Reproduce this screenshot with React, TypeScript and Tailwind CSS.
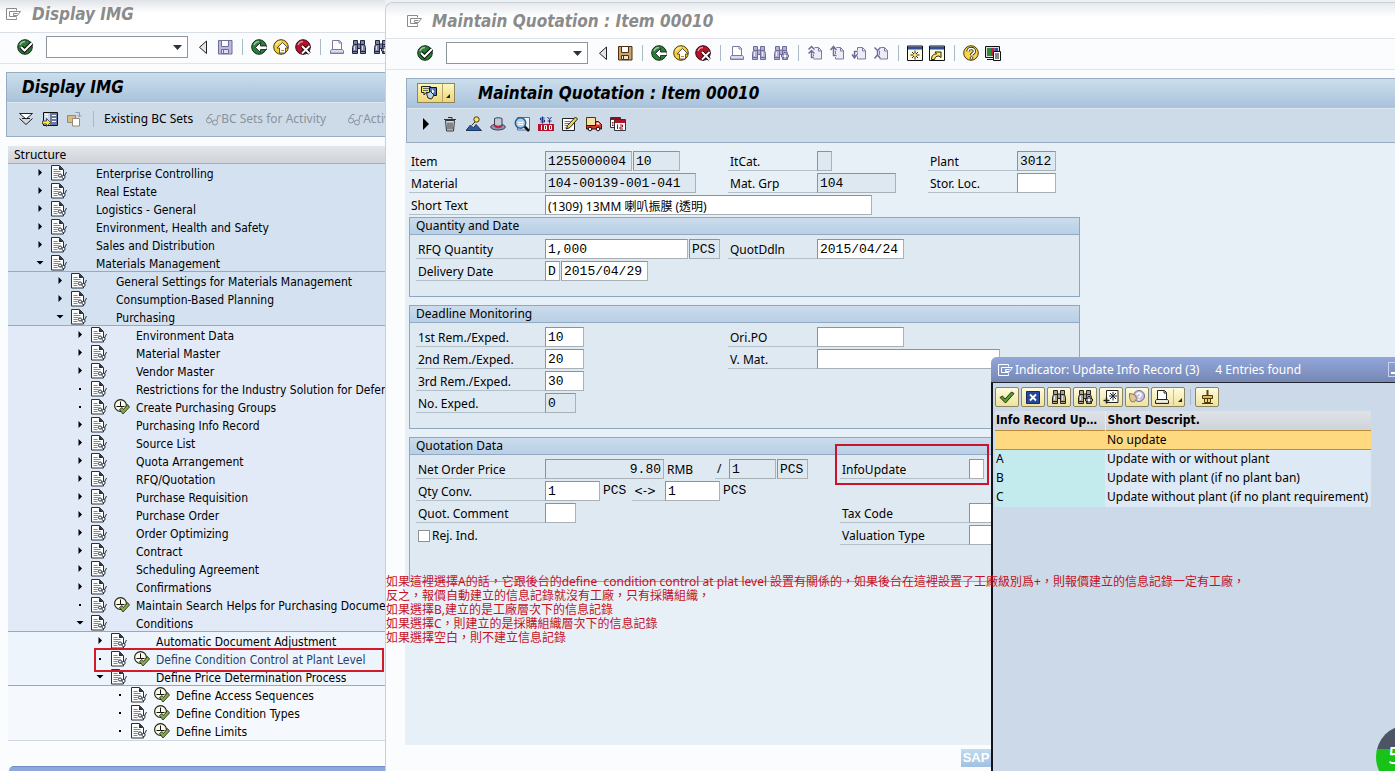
import type { ReactNode } from "react";

type IconProps = { children: ReactNode; w?: number; h?: number };

const Svg = ({ children, w = 16, h = 16 }: IconProps) => (
  <svg width={w} height={h} viewBox={`0 0 ${w} ${h}`} fill="none" aria-hidden="true" className="block shrink-0">
    {children}
  </svg>
);

/* ---------- icons ---------- */

const WindowIcon = ({ color = "#8b8b8b" }: { color?: string }) => (
  <Svg>
    <path d="M11.500 4.500V2.500H1.500v11h10V11.500M4.500 10.500v-5H15.500L12.500 9.500H8.500V7.500h4M4.500 10.500h7l1-1" stroke={color} />
  </Svg>
);

const Ball = ({ fill, edge, children }: { fill: string; edge: string; children: ReactNode }) => (
  <Svg>
    <circle cx="8" cy="8" r="7.300" fill={fill} stroke={edge} />
    <path d="M3 6a5.5 5.5 0 0 1 5-3.5" stroke="#fff" strokeOpacity=".55" strokeWidth="1.5" />
    {children}
  </Svg>
);

const OkIcon = () => (
  <Ball fill="#2c7a34" edge="#0d2b12">
    <path d="M4 8l3.500 3.500L15 4" stroke="#000" strokeWidth="4" />
    <path d="M4 8l3.500 3.500L15 4" stroke="#fff" strokeWidth="2.2" />
  </Ball>
);
const BackIcon = () => (
  <Ball fill="#27803a" edge="#0d2b12">
    <path d="M4.500 8.500l5-5V7H16v3.500H9.500V13.500z" fill="#fff" stroke="#111" strokeWidth=".8" />
  </Ball>
);
const UpIcon = () => (
  <Ball fill="#f4cf38" edge="#4a3a08">
    <path d="M9.500 3.500l5.500 5.500h-2.500V14H6.500V9H4z" fill="#fff" stroke="#333" strokeWidth=".8" />
    <path d="M8 11.500h3" stroke="#b89018" />
  </Ball>
);
const CancelIcon = () => (
  <Ball fill="#b3122b" edge="#3a0610">
    <path d="M7 7l7.500 7.500M14.500 7L7 14.500" stroke="#000" strokeWidth="3.600" />
    <path d="M7 7l7.500 7.500M14.500 7L7 14.500" stroke="#fff" strokeWidth="2" />
  </Ball>
);
const TriLeftIcon = () => (
  <Svg>
    <path d="M11.500 2v12.500l-7-6.200z" fill="#e4e4e4" stroke="#222" />
  </Svg>
);
const SaveIcon = ({ on }: { on?: boolean }) => (
  <Svg>
    <path d="M1.500 1.500h13.500v13.500h-13.500z" fill={on ? "#c9a46c" : "#b9b8df"} stroke={on ? "#4b2e14" : "#6f6d9c"} />
    <path d="M4.500 1.500h7v6h-7z" fill="#fff" stroke={on ? "#4b2e14" : "#6f6d9c"} />
    <path d="M4.500 10.500h7v4h-7z" fill={on ? "#f3e6c8" : "#dedef2"} stroke={on ? "#4b2e14" : "#6f6d9c"} />
    <path d="M6.500 11v3" stroke={on ? "#4b2e14" : "#6f6d9c"} />
  </Svg>
);
const PrintIcon = ({ color = "#7c7aa4", tray = "#b6b4d4" }: { color?: string; tray?: string }) => (
  <Svg>
    <path d="M3.500 10.500v-9h7l2 2v7" fill="#fff" stroke={color} />
    <path d="M10 1.500V4h2.500" stroke={color} />
    <path d="M2.500 10.500h11l1 1.500v2.500h-13v-2.500z" fill={tray} stroke={color} />
    <path d="M2 12h12" stroke="#fff" />
  </Svg>
);
const FindIcon = ({ color = "#6d6b99", fill = "#b3b1d6", plus }: { color?: string; fill?: string; plus?: boolean }) => (
  <Svg>
    <path
      d="M2.500 1.500h4v3.500h3v-3.500h4v4l1 3v6h-5v-5h-3v5h-5v-6l1-3z"
      fill={fill}
      stroke={color}
    />
    <path d="M3 5.500h3.500M9.500 5.500h4M6.500 5v5M9.500 5v5M1.500 12.500h5M9.500 12.500h5" stroke={color} />
    <path d="M3.500 7v4M11.500 7v4" stroke="#fff" strokeOpacity=".75" />
    {plus && <path d="M11 7.500h2v2.500h2.500v2h-2.500v2.500h-2v-2.500h-2.500v-2h2.500z" fill="#fff" stroke={color} />}
  </Svg>
);

const pageArrows = {
  first: "M1.500 4.500L4.500 1.500 7.500 4.500M1.500 8.500L4.500 5.500 7.500 8.500M4.500 6v6.500h2",
  prev: "M1.500 5l3-3.500L7.500 5M4.500 3v7.500h3",
  next: "M1 9.500l2.500 3.500 2.500-3.500M3.500 13V6.500h3",
  last: "M1.500 2.500l3 3 3-3M1.500 13.500l3-3.500 3 3.500M4.500 5v5",
};
const PageIcon = ({ dir }: { dir: keyof typeof pageArrows }) => (
  <Svg>
    <path d="M6.500 2.500h5l3 3v8.500h-8z" fill="#ecebf6" stroke="#7c7aa4" />
    <path d="M11.500 2.500v3.500H14.500" stroke="#7c7aa4" />
    <path d={pageArrows[dir]} stroke="#fff" strokeWidth="3" />
    <path d={pageArrows[dir]} stroke="#6d6b99" strokeWidth="1.500" />
  </Svg>
);
const SessionIcon = () => (
  <Svg>
    <path d="M.5 1h15v14.500H.5z" fill="#fffbe0" stroke="#111" />
    <path d="M1 1.500h14v3H1z" fill="#2d4f96" />
    <path d="M8 5.500v9M3.500 10h9M5 7l6 6M11 7l-6 6" stroke="#222" />
    <circle cx="8" cy="10" r="1.700" fill="#ffe95a" />
  </Svg>
);
const ShortcutIcon = () => (
  <Svg>
    <path d="M.5 1h15v14.500H.5z" fill="#fffbe0" stroke="#111" />
    <path d="M1 1.500h14v3H1z" fill="#2d4f96" />
    <path d="M2.500 14.500c0-4 2-5.500 5-5.500L6 7H12V12.500L10 11c-3 0-4 1-4.500 3.500z" fill="#ffe95a" stroke="#222" />
  </Svg>
);
const HelpIcon = () => (
  <Svg>
    <circle cx="8" cy="8" r="7.300" fill="#f7d64a" stroke="#4a3a08" />
    <path d="M5 6.500C5 2.500 11.500 2.500 11.500 6.300c0 2-3 2-3 4" stroke="#222" strokeWidth="3.200" />
    <path d="M5 6.500C5 2.500 11.500 2.500 11.500 6.300c0 2-3 2-3 4" stroke="#fff" strokeWidth="1.600" />
    <circle cx="8.500" cy="13" r="1.400" fill="#fff" stroke="#222" strokeWidth=".8" />
  </Svg>
);
const LayoutIcon = () => (
  <Svg>
    <path d="M.5 1.500h14v11H.5z" fill="#ddd" stroke="#111" />
    <path d="M2 3h4v8H2z" fill="#2c8a3c" />
    <path d="M6 3h3.500v8H6z" fill="#c3243c" />
    <path d="M9.500 3h3.500v8H9.500z" fill="#3a4fae" />
    <path d="M2 14.500h7" stroke="#111" />
    <path d="M8.500 6.500h7v9h-7z" fill="#fff" stroke="#111" />
    <path d="M10 9h4M10 11h4M10 13h4" stroke="#111" />
  </Svg>
);
const ExpandIcon = () => (
  <Svg>
    <path d="M1.500 2.500h13L8 8z" fill="#fff" stroke="#222" />
    <path d="M1.500 7.500L8 13.500l6.500-6M4 7.500h8" stroke="#222" />
  </Svg>
);
const PositionIcon = () => (
  <Svg>
    <path d="M1.500 1.500h14v13h-14z" fill="#c9d4e6" stroke="#111" />
    <path d="M8 2h7v12H8z" fill="#69799f" />
    <path d="M3 3.500h3M3 5.500h3M10 4.500h4M10 7.500h4M10 10.500h4" stroke="#fff" />
    <path d="M.5 10h4V7.500l4 4-4 4V13h-4z" fill="#f8e837" stroke="#333" strokeWidth=".8" />
  </Svg>
);
const CopyIcon = () => (
  <Svg>
    <path d="M1.500 4.500h8v7h-8z" fill="#d8b98a" stroke="#9a8a70" />
    <path d="M6.500 7.500h7v7.500h-7z" fill="#fff" stroke="#9a8a70" />
    <path d="M9.500 1.500h4v4M11.500 4l2 2 2-2" stroke="#8b9db5" />
  </Svg>
);
const GlassesIcon = () => (
  <Svg>
    <circle cx="4" cy="9.500" r="2.500" stroke="#8a929c" />
    <circle cx="10" cy="11.500" r="2.500" stroke="#8a929c" />
    <path d="M6.500 10l1.500.5M2 8L5 3.500M12 9.500l1-5 3 .5M5 3.500h2.500" stroke="#8a929c" />
  </Svg>
);
const DocIcon = () => (
  <Svg>
    <path d="M.5.500h8l4 4v10.500H.5z" fill="#fff" stroke="#26303c" />
    <path d="M8 .500v4.500h4.500z" fill="#26303c" />
    <path d="M2.500 4.500h4M2.500 6.500h7M2.500 8.500h5M2.500 10.500h4M2.500 12.500h4" stroke="#7a8796" />
    <circle cx="9" cy="10.500" r="1.600" fill="#fff" stroke="#26303c" />
    <circle cx="12.500" cy="12" r="1.600" fill="#fff" stroke="#26303c" />
    <path d="M13.500 11l2-4" stroke="#26303c" />
  </Svg>
);
const ExecIcon = () => (
  <Svg>
    <circle cx="6.500" cy="6.500" r="5.900" fill="#fffbe8" stroke="#1d2712" strokeWidth="1.200" />
    <path d="M6.500 2.500v5h4M6.500 7.500h-4" stroke="#111" />
    <path d="M5.500 10.500L9 15 15.500 8l-2-2.500L9.500 10.500 8 8.500z" fill="#8aa84c" stroke="#26341a" strokeWidth=".9" />
  </Svg>
);
const ServicesIcon = () => (
  <Svg w={18}>
    <path d="M1.500 1.500h9v6H6L4 10V7.500H1.500z" fill="#f8ea4e" stroke="#222" />
    <path d="M3 3.500h6M3 5.500h5" stroke="#666" />
    <path d="M9.500 2.500h7v8h-7z" fill="#4679b5" stroke="#111" />
    <path d="M12 4l2.500 2.500L12 9z" fill="#fff" />
    <path d="M6.500 8.500l4-2 3.500 3.500-2.500 4-3.500-1z" fill="#bcd3ea" stroke="#222" />
  </Svg>
);
const PlayIcon = () => (
  <Svg>
    <path d="M5 2l6 6-6 6z" fill="#000" />
  </Svg>
);
const TrashIcon = () => (
  <Svg>
    <path d="M3.500 4.500h9l-1 10.500h-7z" fill="#d3d8de" stroke="#333" />
    <path d="M2 3.500h12M6 1.500h4v2M6 6.500v7M8 6.500v7M10 6.500v7" stroke="#333" />
  </Svg>
);
const HeaderIcon = () => (
  <Svg>
    <path d="M0 14.500L4.500 9l3 3 2.500-3.500 5.500 6z" fill="#2e5c9e" stroke="#1c355f" />
    <path d="M6 9l3.500-3.500" stroke="#333" />
    <circle cx="10.500" cy="3.500" r="2.700" fill="#f8e068" stroke="#4a3a08" />
  </Svg>
);
const HatIcon = () => (
  <Svg>
    <ellipse cx="8" cy="11" rx="7.300" ry="3" fill="#8f97b0" stroke="#3a3f55" />
    <path d="M4.500 10V2.500C6 1.500 10.500 1.500 12 2.500V10c-2 1.500-5.500 1.500-7.500 0z" fill="#c3c8d8" stroke="#3a3f55" />
    <path d="M4.500 8.500c2 1.500 5.500 1.500 7.500 0V11c-2 1.500-5.500 1.500-7.500 0z" fill="#c3243c" />
  </Svg>
);
const DetailIcon = () => (
  <Svg>
    <path d="M3.500 1.500h12v12.500h-12z" fill="#eef3fa" stroke="#52719e" />
    <path d="M10 10l5 5" stroke="#111" strokeWidth="2.500" />
    <circle cx="6.500" cy="7" r="5.200" fill="#a9d0ee" stroke="#2b5a92" strokeWidth="1.500" />
    <path d="M3.500 6.500h6M4 8.500h5" stroke="#fff" />
  </Svg>
);
const ConditionsIcon = () => (
  <Svg>
    <path d="M0 8h16v7H0z" fill="#b3122b" />
    <path d="M3.500 9v5M6.500 9.500h2v4h-2zM11.500 9.500h2v4h-2z" stroke="#fff" />
    <path d="M6.500 2h-4v2h4v2h-4M4.500 .500v7M9.500 1l2 2.500 2-2.500M11.500 3.500v4M9.500 5h4" stroke="#1f2f8a" />
  </Svg>
);
const EditIcon = () => (
  <Svg>
    <path d="M.5 2.500h12v12H.5z" fill="#fff" stroke="#222" />
    <path d="M2.500 5.500h6M2.500 7.500h5M2.500 9.500h3M2.500 12h2" stroke="#777" />
    <path d="M4.500 13l1-3.500 8-8.500L15.500 3 8 11.500z" fill="#f0d550" stroke="#222" />
  </Svg>
);
const TruckIcon = () => (
  <Svg>
    <path d="M.5 1.500h9v8H.5z" fill="#f5dfa2" stroke="#4a3a08" />
    <path d="M9.500 5.500h3l3 3v4.500H.5V9.500h9z" fill="#d23a2a" stroke="#4a0d08" />
    <path d="M10.500 6.500h2l1.500 2h-3.500z" fill="#fff" />
    <circle cx="4" cy="13" r="1.800" fill="#fff" stroke="#111" />
    <circle cx="12" cy="13" r="1.800" fill="#fff" stroke="#111" />
  </Svg>
);
const CalendarIcon = () => (
  <Svg>
    <path d="M.5 1.500h10v10H.5z" fill="#fff" stroke="#333" />
    <path d="M1 2h9v2H1zM2 6h1.500v1.500H2zM2 8.500h1.500V10H2z" fill="#8d1224" />
    <path d="M4.500 3.500h11v11h-11z" fill="#fff" stroke="#333" />
    <path d="M5 4h10v3H5z" fill="#b3122b" />
    <path d="M7.500 8.500v4.500M10 9h2.500v2H10v2h3" stroke="#8d1224" />
  </Svg>
);
const TickIcon = () => (
  <Svg>
    <path d="M1 8.500L3.500 7l2.500 3 6.500-7L15 4.500 6.500 14z" fill="#5d9b32" stroke="#1d3b10" />
  </Svg>
);
const CloseIcon = () => (
  <Svg>
    <path d="M1.500 2.500h13v12h-13z" fill="#27489a" stroke="#142a66" />
    <path d="M5 5.500l6 6M11 5.500l-6 6" stroke="#fff" strokeWidth="1.800" />
  </Svg>
);
const PersonalIcon = () => (
  <Svg>
    <path d="M3.500 1.500h11.500v12H3.500z" fill="#fff" stroke="#222" />
    <path d="M10 3v8.500M6 7h8M7 4l6 6M13 4l-6 6" stroke="#222" />
    <path d="M.5 11.500h6M3.500 8.500v6" stroke="#222" strokeWidth="1.600" />
  </Svg>
);
const HandHelpIcon = () => (
  <Svg>
    <circle cx="10" cy="7" r="5.500" fill="#c6bfe0" stroke="#6d6b99" />
    <path d="M8 6c0-2.500 4-2.500 4 0 0 1.300-2 1.500-2 3M10 10v1.500" stroke="#fff" strokeWidth="1.600" />
    <path d="M.5 4.500l3 .5 3 1.500 1 3-2 3.500-3.500-.5-1.500-4z" fill="#e0c69a" stroke="#8d7a52" />
  </Svg>
);
const PinIcon = () => (
  <Svg>
    <path d="M8.500 1v7" stroke="#5a4210" strokeWidth="2" />
    <path d="M3.500 6.500h10v3h-10z" fill="#e2b95e" stroke="#4a3a08" />
    <path d="M5.500 9.500h6v4h-6z" fill="#f0cf86" stroke="#4a3a08" />
    <path d="M3 14.500h11M8.500 10v3" stroke="#4a3a08" />
  </Svg>
);

/* ---------- shared bits ---------- */

const IconButton = ({ label, children }: { label: string; children: ReactNode }) => (
  <button type="button" aria-label={label} className="flex shrink-0 items-center justify-center">
    {children}
  </button>
);

const Sep = () => <span className="mr-[2px] ml-[3px] h-4 w-px shrink-0 bg-[#a9b9c6]" />;

const CommandField = () => (
  <div className="mr-[1px] ml-[7px] flex h-[22px] w-[142px] shrink-0 border border-[#8e959c] bg-white">
    <input aria-label="Command" className="w-full min-w-0 px-1 outline-none" />
    <button type="button" aria-label="Command history" className="flex w-5 shrink-0 items-center justify-center">
      <svg width="9" height="5" aria-hidden="true">
        <path d="M0 0h9L4.500 5z" fill="#2b3340" />
      </svg>
    </button>
  </div>
);

type FieldProps = {
  label: string;
  id?: string;
  value?: string;
  cls: string;
  ro?: boolean;
  right?: boolean;
  sans?: boolean;
};

const Field = ({ label, id, value = "", cls, ro, right, sans }: FieldProps) => (
  <input
    id={id}
    aria-label={label}
    defaultValue={value}
    readOnly={ro}
    className={`h-5 shrink-0 border border-t-[#8b9299] border-l-[#8b9299] border-r-[#a9b0b6] border-b-[#a9b0b6] px-[2px] text-black outline-none ${
      ro ? "bg-[#dde8f0]" : "bg-white"
    } ${right ? "text-right" : ""} ${
      sans
        ? "pt-[2px] font-['Noto_Sans','Noto_Sans_CJK_TC',sans-serif] text-[12px]"
        : "font-['Liberation_Mono',monospace] text-[13px]"
    } ${cls}`}
  />
);

const Label = ({ htmlFor, cls, children }: { htmlFor?: string; cls: string; children: ReactNode }) => (
  <label htmlFor={htmlFor} className={`h-5 shrink-0 border-b border-[#b3bfc9] pl-[2px] leading-[22px] ${cls}`}>
    {children}
  </label>
);

const Row = ({ children }: { children: ReactNode }) => <div className="flex h-[22px] items-start">{children}</div>;

const Group = ({ title, children }: { title: string; children: ReactNode }) => (
  <fieldset className="ml-1 w-[671px] border border-[#8ea7c0] bg-[#dfe9f2]">
    <div className="h-[17px] border-b border-[#93aac3] bg-linear-to-b from-[#cbdcec] to-[#b9cfe6] pl-[6px] leading-4">
      {title}
    </div>
    <div className="px-[6px] pt-1">{children}</div>
  </fieldset>
);

/* ---------- left window ---------- */

type Node = { t: string; lvl: number; s?: "open" | "leaf"; exec?: boolean; marked?: boolean };

const nodes: Node[] = [
  { t: "Enterprise Controlling", lvl: 0 },
  { t: "Real Estate", lvl: 0 },
  { t: "Logistics - General", lvl: 0 },
  { t: "Environment, Health and Safety", lvl: 0 },
  { t: "Sales and Distribution", lvl: 0 },
  { t: "Materials Management", lvl: 0, s: "open" },
  { t: "General Settings for Materials Management", lvl: 1 },
  { t: "Consumption-Based Planning", lvl: 1 },
  { t: "Purchasing", lvl: 1, s: "open" },
  { t: "Environment Data", lvl: 2 },
  { t: "Material Master", lvl: 2 },
  { t: "Vendor Master", lvl: 2 },
  { t: "Restrictions for the Industry Solution for Defense", lvl: 2, s: "leaf" },
  { t: "Create Purchasing Groups", lvl: 2, s: "leaf", exec: true },
  { t: "Purchasing Info Record", lvl: 2 },
  { t: "Source List", lvl: 2 },
  { t: "Quota Arrangement", lvl: 2 },
  { t: "RFQ/Quotation", lvl: 2 },
  { t: "Purchase Requisition", lvl: 2 },
  { t: "Purchase Order", lvl: 2 },
  { t: "Order Optimizing", lvl: 2 },
  { t: "Contract", lvl: 2 },
  { t: "Scheduling Agreement", lvl: 2 },
  { t: "Confirmations", lvl: 2 },
  { t: "Maintain Search Helps for Purchasing Documents", lvl: 2, s: "leaf", exec: true },
  { t: "Conditions", lvl: 2, s: "open" },
  { t: "Automatic Document Adjustment", lvl: 3 },
  { t: "Define Condition Control at Plant Level", lvl: 3, s: "leaf", exec: true, marked: true },
  { t: "Define Price Determination Process", lvl: 3, s: "open" },
  { t: "Define Access Sequences", lvl: 4, s: "leaf", exec: true },
  { t: "Define Condition Types", lvl: 4, s: "leaf", exec: true },
  { t: "Define Limits", lvl: 4, s: "leaf", exec: true },
];

const indent = ["pl-[26px]", "pl-[46px]", "pl-[66px]", "pl-[86px]", "pl-[106px]"];
const shade = ["bg-[#d3e1f1]", "bg-[#d3e1f1]", "bg-[#e2eaf8]", "bg-[#eef4fb]", "bg-[#f5f9fd]"];

const TreeRow = ({ n }: { n: Node }) => (
  <li
    className={`relative flex h-[18px] items-center whitespace-nowrap ${indent[n.lvl]} ${shade[n.lvl]} ${
      n.s === "open" ? "border-b border-[#97a9bd]" : ""
    } ${n.marked ? "z-10" : ""}`}
  >
    <span className="flex w-3 shrink-0 justify-center">
      <svg width="8" height="8" aria-hidden="true">
        {n.s === "open" && <path d="M.5 2h7L4 5.500z" />}
        {n.s === "leaf" && <path d="M3 3h2v2H3z" />}
        {!n.s && <path d="M2.500 0l3.500 3.500-3.500 3.500z" />}
      </svg>
    </span>
    <span className="ml-[5px]">
      <DocIcon />
    </span>
    <span className="ml-[7px] w-4 shrink-0">{n.exec && <ExecIcon />}</span>
    <a
      href="#"
      className={`ml-[6px] pt-[2px] font-['DejaVu_Sans_Condensed','Noto_Sans',sans-serif] ${
        n.marked ? "text-[#1d3f6e]" : "text-black"
      }`}
    >
      {n.t}
    </a>
    {n.marked && <span className="absolute -top-[2px] right-[1px] -bottom-1 left-[86px] border-2 border-[#d11a2a]" />}
  </li>
);

const ImgWindow = () => (
  <section className="flex w-[385px] shrink-0 flex-col overflow-hidden bg-[#fbfcfe]">
    <div className="flex h-[33px] shrink-0 items-center gap-2 border-b border-[#d9dfe6] bg-linear-to-b from-[#dfe3e8] to-white to-40% pb-1 pl-[5px]">
      <WindowIcon />
      <h1 className="pl-[3px] font-['DejaVu_Sans_Condensed','Noto_Sans',sans-serif] text-[17px] font-bold text-[#8b8b8b] italic">
        Display IMG
      </h1>
    </div>
    <div className="flex h-[31px] shrink-0 items-center gap-[6px] border-b border-[#dfe3ec] pb-[2px] pl-[17px]">
      <IconButton label="Enter"><OkIcon /></IconButton>
      <CommandField />
      <IconButton label="Previous"><TriLeftIcon /></IconButton>
      <IconButton label="Save"><SaveIcon /></IconButton>
      <Sep />
      <IconButton label="Back"><BackIcon /></IconButton>
      <IconButton label="Exit"><UpIcon /></IconButton>
      <IconButton label="Cancel"><CancelIcon /></IconButton>
      <Sep />
      <IconButton label="Print"><PrintIcon /></IconButton>
      <IconButton label="Find"><FindIcon color="#23263f" fill="#7b83a8" /></IconButton>
      <IconButton label="Find next"><FindIcon color="#23263f" fill="#7b83a8" plus /></IconButton>
    </div>
    <div className="mt-2 ml-[6px] border-y border-l border-[#97acc1]">
      <h2 className="h-[30px] border-b border-[#dce7f0] bg-linear-to-b from-[#cbdeeb] to-[#a9c2dc] pl-[15px] font-['DejaVu_Sans_Condensed','Noto_Sans',sans-serif] text-[17px] leading-[28px] font-bold italic">
        Display IMG
      </h2>
      <div className="flex h-[33px] items-center gap-2 overflow-hidden bg-[#cddbe8] pb-[1px] pl-[11px] whitespace-nowrap">
        <IconButton label="Expand"><ExpandIcon /></IconButton>
        <IconButton label="Position"><PositionIcon /></IconButton>
        <IconButton label="Copy"><CopyIcon /></IconButton>
        <Sep />
        <button type="button">Existing BC Sets</button>
        <button type="button" className="ml-1 flex items-center text-[#8a929c]" disabled>
          <GlassesIcon />BC Sets for Activity
        </button>
        <button type="button" className="ml-[13px] flex items-center text-[#8a929c]" disabled>
          <GlassesIcon />Activated BC Sets
        </button>
      </div>
    </div>
    <div className="mt-[9px] ml-2 border-b border-[#cfd8e2]">
      <div className="h-[18px] border-b border-[#a3aebb] bg-linear-to-b from-[#e4e7eb] to-[#cfd3d9] pl-[6px] leading-[17px]">
        Structure
      </div>
      <ul>
        {nodes.map((n) => (
          <TreeRow key={n.t} n={n} />
        ))}
      </ul>
    </div>
    <div className="mt-auto ml-[9px] h-[5px] shrink-0 rounded-tl-lg border-t border-[#6f8ec4] bg-[#8fa8dc]" />
  </section>
);

/* ---------- value list popup ---------- */

const PopButton = ({ label, children, wide }: { label: string; children: ReactNode; wide?: boolean }) => (
  <button
    type="button"
    aria-label={label}
    className={`flex h-5 items-center justify-center rounded-[2px] border border-[#8b8564] bg-linear-to-b from-[#fffce0] to-[#f0e29a] ${
      wide ? "w-[34px]" : "w-6"
    }`}
  >
    {children}
    {wide && (
      <svg width="13" height="16" aria-hidden="true">
        <path d="M3.500 0v16" stroke="#c9bd82" />
        <path d="M12 9v4H8z" fill="#222" />
      </svg>
    )}
  </button>
);

const options = [
  ["A", "Update with or without plant"],
  ["B", "Update with plant (if no plant ban)"],
  ["C", "Update without plant (if no plant requirement)"],
];

const InfoPopup = () => (
  <div
    role="dialog"
    aria-label="Indicator: Update Info Record"
    className="absolute top-[357px] right-0 bottom-0 left-[991px] flex flex-col overflow-hidden rounded-tl-md bg-[#ccd9e8]"
  >
    <div className="flex h-[26px] shrink-0 items-center border-b border-[#20242c] bg-linear-to-b from-[#93a6db] to-[#7588b4] pl-[6px] whitespace-pre text-white">
      <WindowIcon color="#fff" />
      <span className="ml-[2px]">Indicator: Update Info Record (3)</span>
      <span className="ml-4">4 Entries found</span>
      <button type="button" aria-label="Minimize" className="mr-[-8px] ml-auto flex h-[15px] w-[15px] shrink-0 items-end border border-[#c9d3ee] p-[2px]">
        <span className="h-[2px] w-2 bg-white" />
      </button>
    </div>
    <div className="grow border-l-2 border-[#10141c]">
      <div className="flex h-7 items-center gap-[2px] pl-[2px]">
        <PopButton label="Continue"><TickIcon /></PopButton>
        <PopButton label="Close"><CloseIcon /></PopButton>
        <PopButton label="Find"><FindIcon color="#222" fill="#a9a790" /></PopButton>
        <PopButton label="Find next"><FindIcon color="#222" fill="#a9a790" plus /></PopButton>
        <PopButton label="Personal list"><PersonalIcon /></PopButton>
        <PopButton label="Help"><HandHelpIcon /></PopButton>
        <PopButton label="Print" wide><PrintIcon color="#222" tray="#d8d8c8" /></PopButton>
        <Sep />
        <PopButton label="Hold"><PinIcon /></PopButton>
      </div>
      <table className="ml-[2px] w-[376px] table-fixed border-collapse text-left">
        <colgroup>
          <col className="w-[110px]" />
          <col />
        </colgroup>
        <thead>
          <tr className="h-[19px] bg-linear-to-b from-[#dfe3e8] to-[#cfd4da] font-['DejaVu_Sans_Condensed','Noto_Sans',sans-serif] leading-[18px]">
            <th className="truncate border-r border-[#e8ecf0] pl-[1px]">Info Record Update</th>
            <th className="pl-[2px]">Short Descript.</th>
          </tr>
        </thead>
        <tbody>
          <tr className="h-[19px] border-y border-[#b98d3c] bg-[#ffd97f] leading-[17px]">
            <td />
            <td className="pl-[2px]">No update</td>
          </tr>
          {options.map(([k, d]) => (
            <tr key={k} className="h-[19px] leading-[17px] whitespace-nowrap">
              <td className="bg-[#c3ebee] pb-[2px] pl-[1px]">{k}</td>
              <td className="bg-[#dde9f5] pb-[2px] pl-[2px]">{d}</td>
            </tr>
          ))}
        </tbody>
      </table>
    </div>
  </div>
);

/* ---------- right window ---------- */

const QuotationForm = () => (
  <form className="grow bg-[#e8f0f7] pt-2">
    <div className="pl-1">
      <Row>
        <Label htmlFor="item" cls="w-[136px]">Item</Label>
        <Field id="item" label="Item" value="1255000004" ro cls="w-[87px]" />
        <Field label="Item number" value="10" ro cls="ml-[1px] w-[47px]" />
        <Label htmlFor="itcat" cls="ml-12 w-[89px]">ItCat.</Label>
        <Field id="itcat" label="ItCat." ro cls="w-[15px]" />
        <Label htmlFor="plant" cls="ml-[96px] w-[89px]">Plant</Label>
        <Field id="plant" label="Plant" value="3012" ro cls="w-[39px]" />
      </Row>
      <Row>
        <Label htmlFor="mat" cls="w-[136px]">Material</Label>
        <Field id="mat" label="Material" value="104-00139-001-041" ro cls="w-[151px]" />
        <Label htmlFor="grp" cls="ml-8 w-[89px]">Mat. Grp</Label>
        <Field id="grp" label="Mat. Grp" value="104" ro cls="w-[79px]" />
        <Label htmlFor="loc" cls="ml-8 w-[89px]">Stor. Loc.</Label>
        <Field id="loc" label="Stor. Loc." cls="w-[39px]" />
      </Row>
      <Row>
        <Label htmlFor="txt" cls="w-[136px]">Short Text</Label>
        <Field id="txt" label="Short Text" value="(1309) 13MM 喇叭振膜 (透明)" sans cls="w-[327px]" />
      </Row>
    </div>

    <div className="flex flex-col gap-2">
      <Group title="Quantity and Date">
        <div className="h-[57px]">
          <Row>
            <Label htmlFor="rfq" cls="w-[129px]">RFQ Quantity</Label>
            <Field id="rfq" label="RFQ Quantity" value="1,000" cls="w-[143px]" />
            <Field label="Unit" value="PCS" ro cls="ml-[1px] w-[31px]" />
            <Label htmlFor="ddl" cls="ml-2 w-[89px]">QuotDdln</Label>
            <Field id="ddl" label="QuotDdln" value="2015/04/24" cls="w-[87px]" />
          </Row>
          <Row>
            <Label htmlFor="del" cls="w-[129px]">Delivery Date</Label>
            <Field id="del" label="Date category" value="D" cls="w-[15px]" />
            <Field label="Delivery Date" value="2015/04/29" cls="ml-[1px] w-[87px]" />
          </Row>
        </div>
      </Group>

      <Group title="Deadline Monitoring">
        <div className="h-[101px]">
          <Row>
            <Label htmlFor="r1" cls="w-[129px]">1st Rem./Exped.</Label>
            <Field id="r1" label="1st Rem./Exped." value="10" cls="w-[39px]" />
            <Label htmlFor="ori" cls="ml-[144px] w-[89px]">Ori.PO</Label>
            <Field id="ori" label="Ori.PO" cls="w-[87px]" />
          </Row>
          <Row>
            <Label htmlFor="r2" cls="w-[129px]">2nd Rem./Exped.</Label>
            <Field id="r2" label="2nd Rem./Exped." value="20" cls="w-[39px]" />
            <Label htmlFor="vm" cls="ml-[144px] w-[89px]">V. Mat.</Label>
            <Field id="vm" label="V. Mat." cls="w-[183px]" />
          </Row>
          <Row>
            <Label htmlFor="r3" cls="w-[129px]">3rd Rem./Exped.</Label>
            <Field id="r3" label="3rd Rem./Exped." value="30" cls="w-[39px]" />
          </Row>
          <Row>
            <Label htmlFor="ne" cls="w-[129px]">No. Exped.</Label>
            <Field id="ne" label="No. Exped." value="0" ro cls="w-[31px]" />
          </Row>
        </div>
      </Group>

      <Group title="Quotation Data">
        <div className="h-[122px]">
          <Row>
            <Label htmlFor="net" cls="w-[129px]">Net Order Price</Label>
            <Field id="net" label="Net Order Price" value="9.80" ro right cls="w-[119px]" />
            <span className="w-[51px] pl-[3px] leading-[22px]">RMB</span>
            <span className="h-5 w-[14px] border-b border-[#b3bfc9] pl-[2px] leading-5">/</span>
            <Field label="Price unit" value="1" ro cls="w-[47px]" />
            <Field label="Order price unit" value="PCS" ro cls="ml-[1px] w-[31px]" />
            <div className="relative ml-8 flex">
              <Label htmlFor="upd" cls="w-[129px]">InfoUpdate</Label>
              <Field id="upd" label="InfoUpdate" cls="w-[15px]" />
              <span className="pointer-events-none absolute -inset-x-[5px] -top-[15px] -bottom-[6px] border-2 border-[#c8142c]" />
            </div>
          </Row>
          <Row>
            <Label htmlFor="qc" cls="w-[129px]">Qty Conv.</Label>
            <Field id="qc" label="Qty Conv. numerator" value="1" cls="w-[55px]" />
            <span className="w-8 pl-[3px] font-['Liberation_Mono',monospace] text-[13px] leading-5">PCS</span>
            <span className="h-5 w-[33px] border-b border-[#b3bfc9] pl-[2px] font-['DejaVu_Sans_Condensed','Noto_Sans',sans-serif] leading-5">
              &lt;-&gt;
            </span>
            <Field label="Qty Conv. denominator" value="1" cls="w-[55px]" />
            <span className="pl-[3px] font-['Liberation_Mono',monospace] text-[13px] leading-5">PCS</span>
          </Row>
          <Row>
            <Label htmlFor="qcm" cls="w-[129px]">Quot. Comment</Label>
            <Field id="qcm" label="Quot. Comment" cls="w-[31px]" />
            <Label htmlFor="tax" cls="ml-[264px] w-[129px]">Tax Code</Label>
            <Field id="tax" label="Tax Code" cls="w-[31px]" />
          </Row>
          <Row>
            <label className="flex h-[22px] w-[424px] items-center gap-[2px] pl-[2px]">
              <input type="checkbox" className="h-3 w-3 appearance-none border border-[#8b9299] bg-white" />
              Rej. Ind.
            </label>
            <Label htmlFor="val" cls="w-[129px]">Valuation Type</Label>
            <Field id="val" label="Valuation Type" cls="w-[87px]" />
          </Row>
        </div>
      </Group>
    </div>
  </form>
);

const QuotationWindow = () => (
  <section className="mt-[2px] flex min-w-0 grow flex-col overflow-hidden rounded-tl-lg border-t border-l border-[#c9cfd6] bg-[#fbfcfe]">
    <div className="flex h-9 shrink-0 items-center gap-2 border-b border-[#dfe3e8] bg-linear-to-b from-[#e6e9ed] to-white to-40% pl-5">
      <WindowIcon />
      <h1 className="pl-[2px] font-['DejaVu_Sans_Condensed','Noto_Sans',sans-serif] text-[17px] font-bold text-[#8b8b8b] italic">
        Maintain Quotation : Item 00010
      </h1>
    </div>
    <div className="flex h-[31px] shrink-0 items-center gap-[6px] border-b border-[#dfe3ec] pb-[2px] pl-[31px]">
      <IconButton label="Enter"><OkIcon /></IconButton>
      <CommandField />
      <IconButton label="Previous"><TriLeftIcon /></IconButton>
      <IconButton label="Save"><SaveIcon on /></IconButton>
      <Sep />
      <IconButton label="Back"><BackIcon /></IconButton>
      <IconButton label="Exit"><UpIcon /></IconButton>
      <IconButton label="Cancel"><CancelIcon /></IconButton>
      <Sep />
      <IconButton label="Print"><PrintIcon /></IconButton>
      <IconButton label="Find"><FindIcon /></IconButton>
      <IconButton label="Find next"><FindIcon plus /></IconButton>
      <Sep />
      <IconButton label="First page"><PageIcon dir="first" /></IconButton>
      <IconButton label="Previous page"><PageIcon dir="prev" /></IconButton>
      <IconButton label="Next page"><PageIcon dir="next" /></IconButton>
      <IconButton label="Last page"><PageIcon dir="last" /></IconButton>
      <Sep />
      <IconButton label="New session"><SessionIcon /></IconButton>
      <IconButton label="Shortcut"><ShortcutIcon /></IconButton>
      <Sep />
      <IconButton label="Help"><HelpIcon /></IconButton>
      <IconButton label="Layout"><LayoutIcon /></IconButton>
    </div>
    <div className="mt-2 ml-5 shrink-0 border-y border-l border-[#97acc1]">
      <div className="flex h-[30px] items-center gap-[23px] border-b border-[#dce7f0] bg-linear-to-b from-[#cbdeeb] to-[#a9c2dc] pb-[2px] pl-[10px]">
        <button
          type="button"
          aria-label="Services for object"
          className="flex h-5 w-[38px] items-center justify-center border border-[#8b8564] bg-linear-to-b from-[#fdf6c0] to-[#ecd678]"
        >
          <ServicesIcon />
          <svg width="14" height="18" aria-hidden="true">
            <path d="M4.500 0v18" stroke="#b9a560" />
            <path d="M12 10v4H8z" fill="#222" />
          </svg>
        </button>
        <h2 className="font-['DejaVu_Sans_Condensed','Noto_Sans',sans-serif] text-[17px] font-bold italic">
          Maintain Quotation : Item 00010
        </h2>
      </div>
      <div className="flex h-[33px] items-center gap-2 bg-[#cddbe8] pb-[3px] pl-[11px]">
        <IconButton label="Overview"><PlayIcon /></IconButton>
        <IconButton label="Delete"><TrashIcon /></IconButton>
        <IconButton label="Header"><HeaderIcon /></IconButton>
        <IconButton label="Header details"><HatIcon /></IconButton>
        <IconButton label="Item details"><DetailIcon /></IconButton>
        <IconButton label="Conditions"><ConditionsIcon /></IconButton>
        <IconButton label="Texts"><EditIcon /></IconButton>
        <IconButton label="Delivery address"><TruckIcon /></IconButton>
        <IconButton label="Delivery schedule"><CalendarIcon /></IconButton>
      </div>
    </div>
    <div className="ml-[19px] flex grow flex-col">
      <QuotationForm />
      <div className="flex h-[26px] shrink-0 items-center pl-[556px]">
        <span className="h-[18px] w-[30px] bg-linear-to-b from-[#bfdcf0] to-[#a3c0e4] text-center font-['Liberation_Sans',sans-serif] text-[13px] leading-[18px] font-bold text-white">
          SAP
        </span>
      </div>
    </div>
  </section>
);

const notes = [
  "如果這裡選擇A的話，它跟後台的define  condition control at plat level 設置有關係的，如果後台在這裡設置了工廠級別爲+，則報價建立的信息記錄一定有工廠，",
  "反之，報價自動建立的信息記錄就沒有工廠，只有採購組織，",
  "如果選擇B,建立的是工廠層次下的信息記錄",
  "如果選擇C，則建立的是採購組織層次下的信息記錄",
  "如果選擇空白，則不建立信息記錄",
];

export default function App() {
  return (
    <div className="relative flex h-screen overflow-hidden bg-[#eef1f4] font-['Noto_Sans','Noto_Sans_CJK_TC',sans-serif] text-[12px] leading-4 text-black">
      <ImgWindow />
      <QuotationWindow />
      <InfoPopup />
      <div lang="zh-Hant" className="absolute top-[575px] left-[386px] leading-[14px] whitespace-pre text-[#c4121f]">
        {notes.map((n) => (
          <p key={n}>{n}</p>
        ))}
      </div>
      <div className="absolute -right-[48px] bottom-[-18px] h-[64px] w-[67px] rounded-full bg-linear-to-b from-[#4d5464] from-38% to-[#17c317] to-38% pt-[14px] pl-[12px] text-[24px] leading-8 text-white">
        5
      </div>
    </div>
  );
}
